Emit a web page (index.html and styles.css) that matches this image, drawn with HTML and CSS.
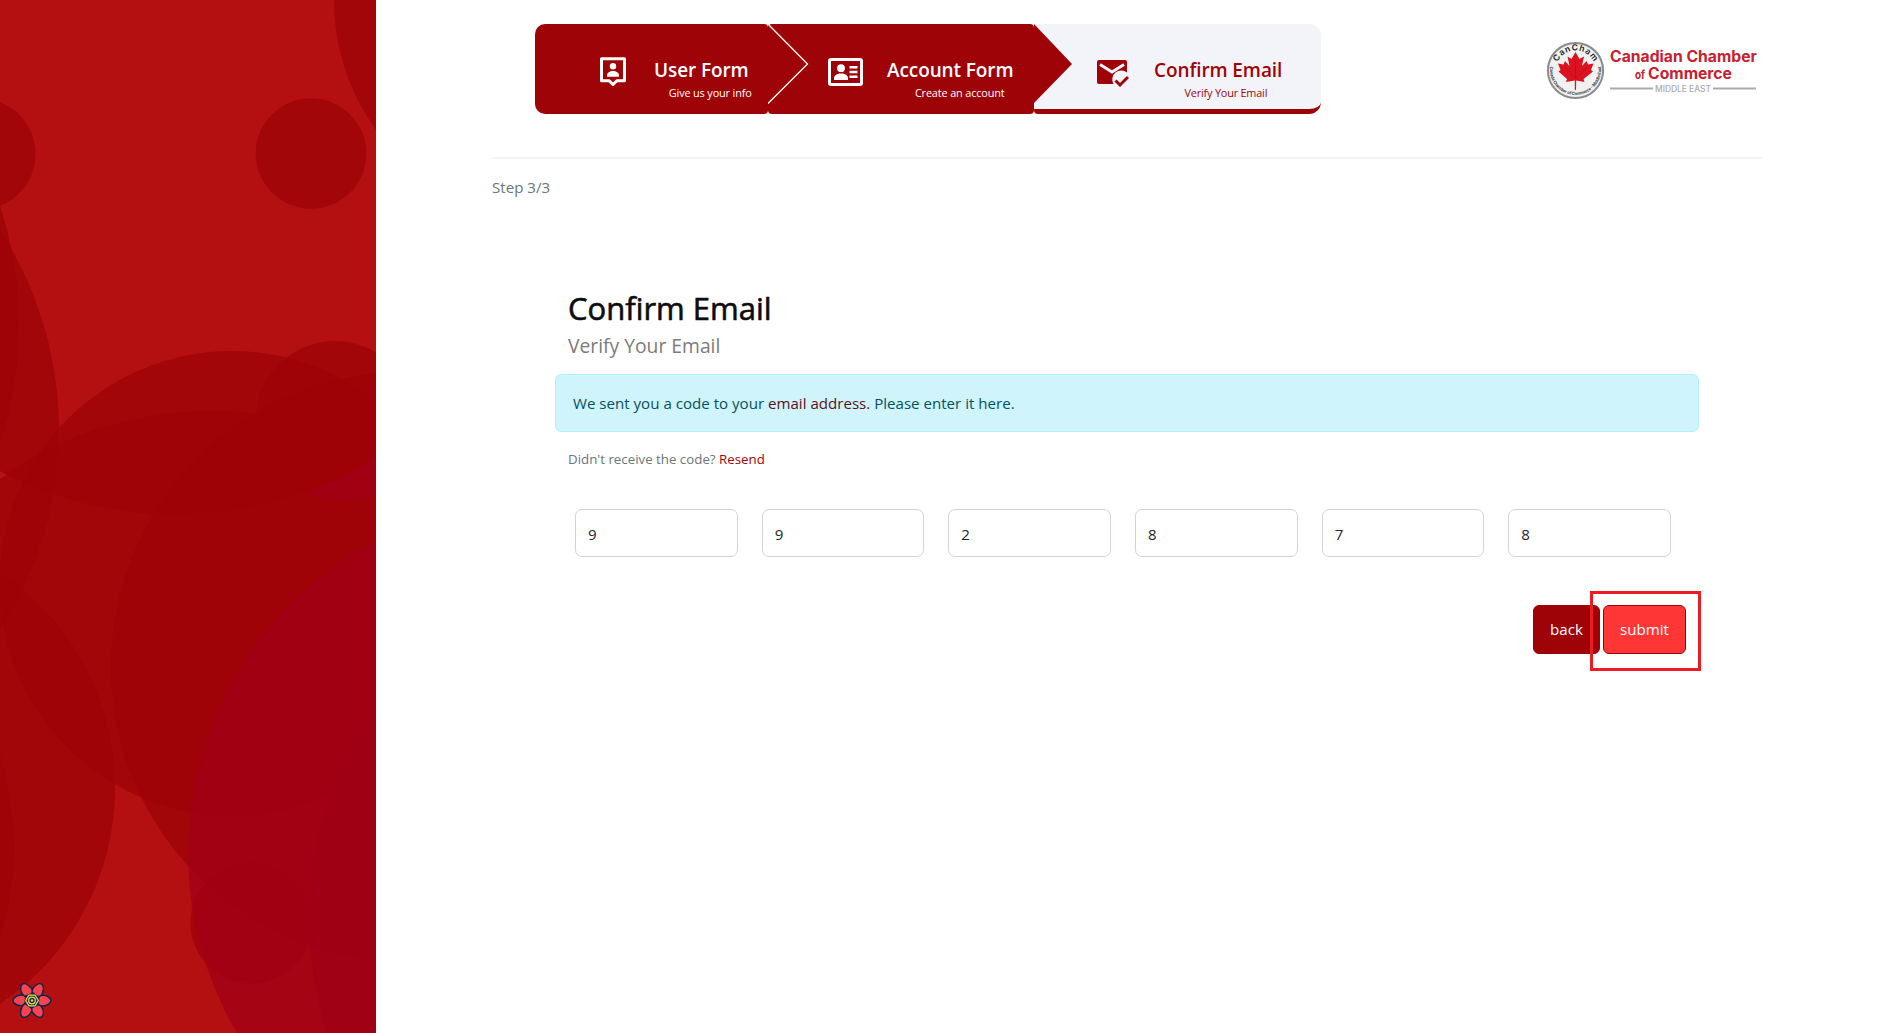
FILE: index.html
```html
<!DOCTYPE html>
<html lang="en">
<head>
<meta charset="utf-8">
<title>Confirm Email</title>
<link rel="stylesheet" href="styles.css">
</head>
<body>
<div class="page">
  <aside class="side">
    <svg class="bubbles" viewBox="0 0 376 1033" aria-hidden="true">
      <g class="bubble">
        <circle cx="556" cy="0" r="222"/>
        <circle cx="311" cy="153.5" r="55.3"/>
        <circle cx="-20" cy="154" r="55.5"/>
        <circle cx="-366" cy="325" r="385"/>
        <circle cx="-309" cy="430" r="368"/>
        <circle cx="232" cy="583.5" r="232.5"/>
        <circle cx="335" cy="420" r="79"/>
        <path d="M5 474A375 375 0 0 1 384 452A380 380 0 0 1 5 474Z"/>
        <circle cx="406" cy="667" r="295"/>
        <circle cx="251" cy="923" r="60.5"/>
        <circle cx="-145" cy="788" r="260"/>
        <circle cx="-289" cy="847" r="303"/>
      </g>
      <path class="spark" d="M0 471L7 475L0 479Z"/>
      <path class="plum" d="M376 455Q343 480 303 493Q340 507 376 495Z"/>
      <circle class="plum" cx="543" cy="853" r="355"/>
      <circle class="plum" cx="710" cy="920" r="400"/>
    </svg>
    <button class="devtools" aria-label="Query devtools">
      <svg viewBox="-20 -18 40 36">
        <g class="petals">
          <path id="petal" d="M-7 4C-13 7-19 3-19 0S-13-7-6-5Z"/>
          <use href="#petal" transform="rotate(60)"/>
          <use href="#petal" transform="rotate(120)"/>
          <use href="#petal" transform="rotate(180)"/>
          <use href="#petal" transform="rotate(240)"/>
          <use href="#petal" transform="rotate(300)"/>
        </g>
        <path class="core" d="M-7.5 0L-3.8-6.5H3.8L7.5 0L3.8 6.5H-3.8Z"/>
        <path class="ring" d="M-6.3 0L-3.1-5.4H3.1L6.3 0L3.1 5.4H-3.1Z"/>
        <circle class="ring" r="3.3"/>
        <circle class="dot" r="1.2"/>
      </svg>
    </button>
  </aside>

  <main class="main">
    <header class="top">
      <nav class="steps">
        <div class="step step-user">
          <svg class="icon" viewBox="0 0 28 30"><path class="line" d="M2.5 1.7h23v22h-7.700L14 27.500l-3.800-3.800H2.500Z"/><circle cx="14" cy="9.300" r="3.200"/><path d="M8 19.800v-1.300c0-3 3-4.500 6-4.500s6 1.500 6 4.500v1.300Z"/></svg>
          <div class="label"><span class="name">User Form</span><span class="hint">Give us your info</span></div>
          <svg class="arrow outlined" viewBox="0 0 42 90"><path d="M0 0L39.500 40L0 79.500Z"/><path class="edge" d="M0 0L39.500 40L0 79.500"/></svg>
        </div>
        <div class="step step-account">
          <svg class="icon" viewBox="0 0 36 28"><rect class="line" x="1.500" y="1.500" width="32" height="25" rx="1.500"/><circle cx="13" cy="10.200" r="3.900"/><path d="M6 22v-1.500c0-3.500 3-5 7-5s7 1.500 7 5V22Z"/><path d="M21.500 8h8v2.500h-8zM21.500 12.700h8v2.500h-8zM21.500 17.400h8v2.500h-8z"/></svg>
          <div class="label"><span class="name">Account Form</span><span class="hint">Create an account</span></div>
          <svg class="arrow" viewBox="0 0 42 90"><path d="M0 0L38 40L0 79Z"/></svg>
        </div>
        <div class="step step-confirm">
          <svg class="icon" viewBox="0 0 32 28"><path d="M2 0H28Q30 0 30 2V12.500A9 9 0 0 0 16.500 24H2Q0 24 0 22V2Q0 0 2 0Z"/><path class="flap" d="M3 4.500L15 12L27 4.500"/><path class="check" d="M18.500 20.500L23 25L31 17"/></svg>
          <div class="label"><span class="name">Confirm Email</span><span class="hint">Verify Your Email</span></div>
        </div>
      </nav>
      <svg class="logo" viewBox="0 0 212 60" role="img" aria-label="Canadian Chamber of Commerce Middle East">
        <defs>
          <path id="arc-top" d="M9.500 30.500A20 20 0 0 1 49.500 30.500"/>
          <path id="arc-bottom" d="M4.200 25.500A25.600 25.600 0 1 0 54.800 25.500"/>
        </defs>
        <circle class="seal" cx="29.500" cy="30.500" r="27.600"/>
        <text class="seal-name"><textPath href="#arc-top" startOffset="50%" text-anchor="middle" textLength="45">CanCham</textPath></text>
        <text class="seal-ring"><textPath href="#arc-bottom" startOffset="50%" text-anchor="middle" textLength="86">Canada Chamber of Commerce - Middle East</textPath></text>
        <path class="leaf" d="M29.500 12L33.500 19L38 16.500L36 26L40.500 21L42 24.500L47.500 23.500L45 30L47 31.500L37.500 39L38.500 42L30.200 40.500L30 50H28.800L28.800 40.500L20 42L21 39L12.500 31.500L14.500 30L12 23.500L17.500 24.500L19 21L23.500 26L21.500 16.500L25.500 19Z"/>
        <path class="veins" d="M29.500 39V20M29 38L19 27M30 38L41 27"/>
        <text class="brand" x="64" y="22" textLength="147" lengthAdjust="spacingAndGlyphs">Canadian Chamber</text>
        <text class="brand of" x="89" y="38.500" textLength="10" lengthAdjust="spacingAndGlyphs">of</text>
        <text class="brand" x="102" y="38.500" textLength="84" lengthAdjust="spacingAndGlyphs">Commerce</text>
        <path class="rule" d="M64 48.500H107M167 48.500H210"/>
        <text class="region" x="109" y="51.500" textLength="56" lengthAdjust="spacingAndGlyphs">MIDDLE EAST</text>
      </svg>
    </header>
    <hr class="divider">
    <p class="progress">Step 3/3</p>

    <form class="form">
      <h1 class="title">Confirm Email</h1>
      <p class="subtitle">Verify Your Email</p>
      <div class="alert">We sent you a code to your <span class="mail">email address.</span> Please enter it here.</div>
      <p class="resend">Didn't receive the code? <a class="link">Resend</a></p>
      <div class="code">
        <input class="digit" value="9">
        <input class="digit" value="9">
        <input class="digit" value="2">
        <input class="digit" value="8">
        <input class="digit" value="7">
        <input class="digit" value="8">
      </div>
      <div class="actions">
        <button class="btn" type="button">back</button>
        <div class="marked"><button class="btn submit" type="button">submit</button></div>
      </div>
    </form>
  </main>
</div>
</body>
</html>
```
FILE: styles.css
```css
* { box-sizing: border-box; }
body {
  margin: 0;
  font-family: "Open Sans", "Noto Sans", sans-serif;
  font-size: 15.1px;
  color: #212529;
  background: #fff;
}
p, h1 { margin: 0; font-weight: 400; }
.page { display: flex; height: 1033px; overflow: hidden; }

.side { position: relative; flex: 0 0 376px; background: #b41011; overflow: hidden; }
.bubbles { display: block; width: 376px; height: 1033px; }
.bubble { fill: #9e0307; }
.bubble > * { fill-opacity: .75; }
.plum { fill: #a00016; fill-opacity: .75; }
.spark { fill: #b4101e; }
.devtools { position: absolute; left: 12px; bottom: 14px; width: 40px; height: 37px; padding: 0; border: 0; background: none; }
.devtools svg { display: block; width: 40px; height: 37px; overflow: visible; }
.petals { fill: #ff4154; stroke: #002b48; stroke-width: 1.4; }
.core { fill: #002b48; }
.ring { fill: none; stroke: #ffd94c; stroke-width: 1.2; }
.dot { fill: #ffd94c; }

.main { flex: 1; min-width: 0; padding: 24px 116px 0 115px; }
.top { display: flex; justify-content: space-between; height: 133px; padding-left: 44px; }
.steps { display: flex; flex: none; height: 90px; }
.step {
  position: relative;
  display: flex;
  border-radius: 10px;
  background: #9e0307;
  color: #fff;
}
.step-user { width: 233px; padding-left: 64px; border-radius: 10px 4px 4px 10px; }
.step-account { width: 266px; padding-left: 60px; border-radius: 4px; }
.step-confirm {
  width: 287px;
  padding-left: 63px;
  border-radius: 0 12px 12px 4px;
  border-bottom: 5px solid #9e0307;
  background: #f3f4fa;
  color: #9e0307;
}
.arrow { position: absolute; z-index: 1; left: 100%; top: 0; width: 42px; height: 90px; fill: #9e0307; }
.edge { fill: none; stroke: #fff; stroke-width: 1.3; }
.icon { display: block; flex: none; fill: currentColor; }
.line { fill: none; stroke: currentColor; stroke-width: 3; stroke-linejoin: round; }
.flap { fill: none; stroke: #f3f4fa; stroke-width: 3; }
.check { fill: none; stroke: currentColor; stroke-width: 3; }
.step-user .icon { width: 28px; height: 30px; margin-top: 33px; }
.step-account .icon { width: 36px; height: 28px; margin-top: 34px; }
.step-confirm .icon { width: 32px; height: 28px; margin-top: 36px; }
.label { display: flex; flex-direction: column; padding-top: 34px; white-space: nowrap; }
.step-user .label { margin-left: 27px; }
.step-account .label { margin-left: 23px; }
.step-confirm .label { margin-left: 25px; }
.name { font-size: 19px; line-height: 24px; font-weight: 600; letter-spacing: -.1px; }
.hint { align-self: flex-end; margin-top: 1px; font-size: 10.900px; line-height: 20px; letter-spacing: -.15px; }
.step-user .hint { margin-right: -3px; }
.step-account .hint { margin-right: 9px; }
.step-confirm .hint { margin-right: 15px; letter-spacing: -.2px; }

.logo { flex: none; width: 212px; height: 60px; margin: 16px 5px 0 0; }
.seal { fill: #f1f1f1; stroke: #898b8d; stroke-width: 2; }
.seal-name { font: 600 8.500px Inter, sans-serif; fill: #222; }
.seal-ring { font: 700 4.200px Inter, sans-serif; fill: #444; }
.leaf { fill: #dc1220; }
.veins { fill: none; stroke: #a80e19; stroke-width: .6; }
.brand { font: 700 15.500px Inter, sans-serif; fill: #c8202f; }
.of { font-size: 12px; }
.region { font: 500 8.500px Inter, sans-serif; fill: #aaa; }
.rule { stroke: #aaa; stroke-width: 2; }

.divider { height: 2px; margin: 0 1px 0 0; border: 0; background: #f6f6f7; }
.progress { margin-top: 16px; padding-left: 1px; line-height: 24px; color: #6c757d; }

.form { margin: 90px 64px 0; }
.title {
  padding-left: 13px;
  font-size: 31px;
  line-height: 38px;
  color: #0d0d0d;
  -webkit-text-stroke: .6px #0d0d0d;
}
.subtitle { padding-left: 13px; font-size: 19.300px; line-height: 32px; margin-top: 3px; color: #7b7b7b; }
.alert {
  margin-top: 12px;
  height: 58px;
  padding: 16px 17px;
  border: 1px solid #b6effb;
  border-radius: 6px;
  background: #cff4fc;
  color: #055160;
  line-height: 25px;
}
.mail { color: #5a1020; }
.resend { padding-left: 13px; margin-top: 16px; font-size: 13.300px; line-height: 22px; color: #6c757d; }
.link { color: #9e0307; }
.code { display: flex; gap: 24px; margin: 39px 28px 0 20px; }
.digit {
  flex: 1;
  min-width: 0;
  height: 48px;
  padding: 1px 12px 0;
  border: 1px solid #ced4da;
  border-radius: 7px;
  font: inherit;
  color: #212529;
}
.actions { display: flex; justify-content: flex-end; margin: 34px -2px 0 0; }
.btn {
  width: 67px;
  height: 49px;
  margin-top: 14px;
  padding: 0 0 2px;
  border: 1px solid #9e0307;
  border-radius: 6px;
  background: #9e0307;
  color: #fff;
  font: inherit;
}
.marked { width: 111px; height: 80px; margin-left: -10px; padding: 11px 0 0 10px; border: 3px solid #ed1c24; z-index: 1; }
.submit { width: 83px; margin: 0; background: #ff3636; display: block; }
```
